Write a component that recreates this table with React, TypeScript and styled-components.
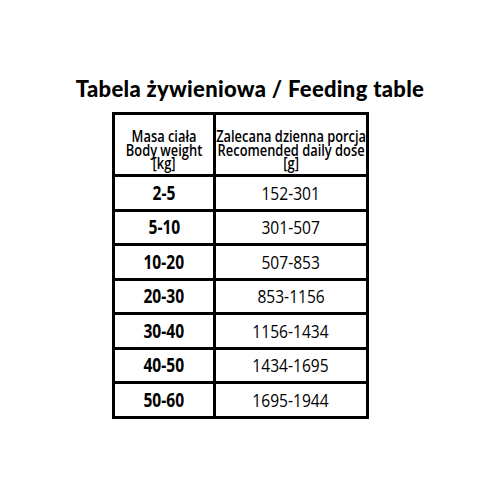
import React, { FC } from "react";
import styled, { createGlobalStyle } from "styled-components";

const GlobalStyle = createGlobalStyle`
  body {
    margin: 0;
    background: #ffffff;
    color: #000000;
  }
`;

const Page = styled.div`
  display: flex;
  flex-direction: column;
  align-items: center;
  width: 500px;
  height: 500px;
  padding-top: 76px;
  box-sizing: border-box;
`;

const Title = styled.h1`
  margin: 0 0 10px 0;
  font-family: "Lato", "Open Sans", sans-serif;
  font-weight: 900;
  font-size: 22px;
  line-height: 26px;
  letter-spacing: 0.3px;
  text-align: center;
`;

// black background + gaps draw the grid lines
const Grid = styled.div`
  display: grid;
  grid-template-columns: 98px 150px;
  grid-template-rows: 59px;
  grid-auto-rows: 31.5px;
  gap: 3px;
  padding: 3px;
  margin-left: -19px;
  background: #000;
  font-family: "Open Sans", "Liberation Sans", sans-serif;
`;

const Cell = styled.div<{ $head?: boolean }>`
  display: flex;
  align-items: center;
  justify-content: center;
  background: #fff;
  padding-top: ${(p) => (p.$head ? "10px" : "0")};
  box-sizing: border-box;
`;

const Squeeze = styled.span<{ $bold?: boolean; $head?: boolean }>`
  display: inline-block;
  white-space: nowrap;
  text-align: center;
  transform: scaleX(${(p) => (p.$head ? 0.78 : 0.82)});
  font-size: ${(p) => (p.$head ? "16.5px" : "19px")};
  line-height: ${(p) => (p.$head ? "13.5px" : "22px")};
  font-weight: ${(p) => (p.$bold ? 700 : p.$head ? 600 : 500)};
`;

const rows: [string, string][] = [
  ["2-5", "152-301"],
  ["5-10", "301-507"],
  ["10-20", "507-853"],
  ["20-30", "853-1156"],
  ["30-40", "1156-1434"],
  ["40-50", "1434-1695"],
  ["50-60", "1695-1944"],
];

const App: FC = () => {
  return (
    <>
      <GlobalStyle />
      <Page>
        <Title>Tabela żywieniowa / Feeding table</Title>
        <Grid>
          <Cell $head>
            <Squeeze $head>
              Masa ciała
              <br />
              Body weight
              <br />
              [kg]
            </Squeeze>
          </Cell>
          <Cell $head>
            <Squeeze $head>
              Zalecana dzienna porcja
              <br />
              Recomended daily dose
              <br />
              [g]
            </Squeeze>
          </Cell>
          {rows.map(([kg, g]) => (
            <React.Fragment key={kg}>
              <Cell>
                <Squeeze $bold>{kg}</Squeeze>
              </Cell>
              <Cell>
                <Squeeze>{g}</Squeeze>
              </Cell>
            </React.Fragment>
          ))}
        </Grid>
      </Page>
    </>
  );
};

export default App;
